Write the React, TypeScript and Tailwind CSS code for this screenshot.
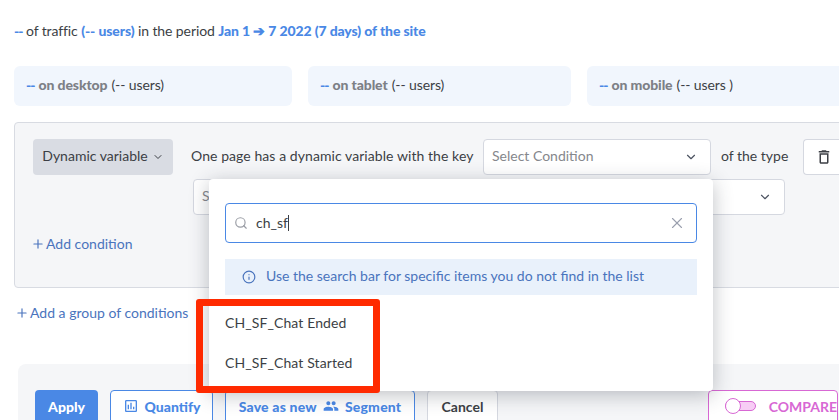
import { ChevronDown, Info, Plus, Search, X } from 'lucide-react';
import { MdOutlineAssessment, MdOutlineDelete, MdPeople } from 'react-icons/md';

const font = { fontFamily: 'Lato, "Liberation Sans", sans-serif' };

function StatCard({ label, users, className }: { label: string; users: string; className: string }) {
    return (
        <div className={`flex h-10 shrink-0 items-center rounded-md bg-[#f1f6fd] px-3 pb-1 tracking-[-0.1px] text-[#3c3f45] ${className}`}>
            <span className="font-black tracking-[-1px] text-[#4a88e5]">--</span>
            <span className="ml-1 font-black text-[#7d8086]">{label}</span>
            <span className="ml-1">{users}</span>
        </div>
    );
}

function SelectBox({ label, className }: { label: string; className: string }) {
    return (
        <div className={`flex h-9 items-center justify-between rounded border border-[#d5d8e0] bg-white pl-2 pr-3 text-[#85878c] ${className}`}>
            <span className="pb-1">{label}</span>
            <ChevronDown className="h-3.5 w-3.5 text-[#4c5361]" />
        </div>
    );
}

export default function App() {
    return (
        <div className="relative h-[420px] w-[839px] overflow-hidden bg-white text-[14px] text-[#3c3f45]" style={font}>
            <p className="ml-3.5 pt-[22px] leading-[18px] tracking-[-0.1px]">
                <span className="font-black tracking-[-1px] text-[#4a88e5]">--</span> of traffic{' '}
                <span className="font-black text-[#4a88e5]">(-- users)</span> in the period{' '}
                <span className="font-black tracking-[-0.12px] text-[#4a88e5]">Jan 1 ➔ 7 2022 (7 days) of the site</span>
            </p>

            <div className="ml-3.5 mt-[26px] flex gap-4">
                <StatCard label="on desktop" users="(-- users)" className="w-[278px]" />
                <StatCard label="on tablet" users="(-- users)" className="w-[263px]" />
                <StatCard label="on mobile" users="(-- users )" className="w-[280px]" />
            </div>

            <div className="ml-3.5 mt-4 h-[166px] w-[860px] rounded border border-[#d8dbe2] bg-[#f5f6f8] pl-[18px] pt-4">
                <div className="flex items-center">
                    <div className="flex h-9 w-[140px] items-center justify-center gap-1 rounded bg-[#d9dce3]">
                        <span className="pb-1">Dynamic variable</span>
                        <ChevronDown className="h-3 w-3" />
                    </div>
                    <span className="ml-[18px] w-[292px] whitespace-nowrap pb-1 tracking-[0.07px]">One page has a dynamic variable with the key</span>
                    <SelectBox label="Select Condition" className="w-[228px]" />
                    <span className="ml-2.5 w-[82px] whitespace-nowrap pb-1">of the type</span>
                    <div className="flex h-9 w-10 items-center justify-center rounded-l border border-r-0 border-[#d5d8e0] bg-white">
                        <MdOutlineDelete className="h-[18px] w-[18px]" />
                    </div>
                </div>
                <SelectBox label="Select" className="ml-40 mt-1 w-[592px]" />
                <div className="mt-[18px] flex items-center text-[#4a74bd]">
                    <Plus className="-ml-0.5 h-3.5 w-3.5" />
                    <span className="ml-px">Add condition</span>
                </div>
            </div>

            <div className="ml-[15px] mt-3.5 flex items-center text-[#4a74bd]">
                <Plus className="h-3.5 w-3.5" />
                <span className="ml-px">Add a group of conditions</span>
            </div>

            <div className="ml-[18px] mt-[41px] flex h-14 w-[840px] items-start rounded-tl-lg bg-[#f5f6f8] pl-[17px] pt-[26px] font-black">
                <div className="flex h-[34px] w-[63px] items-center justify-center rounded-t bg-[#4a88e5] pb-0.5 text-white">Apply</div>
                <div className="ml-3 flex h-[34px] w-[103px] items-center justify-center gap-1.5 rounded-t border border-[#4a88e5] bg-white pb-0.5 text-[#4a88e5]">
                    <MdOutlineAssessment className="h-4 w-4" />
                    Quantify
                </div>
                <div className="ml-3 flex h-[34px] w-[190px] items-center justify-center gap-1.5 rounded-t border border-[#4a88e5] bg-white pb-0.5 tracking-[0.2px] text-[#4a88e5]">
                    Save as new
                    <MdPeople className="h-4 w-4" />
                    Segment
                </div>
                <div className="ml-3 flex h-[34px] w-[71px] items-center justify-center rounded-t border border-[#d5d8e0] bg-white pb-0.5 font-bold">Cancel</div>
                <div className="ml-[210px] flex h-[34px] w-[130px] items-center whitespace-nowrap rounded-t border border-[#d868d4] bg-white pb-0.5 pl-4 font-bold text-[#d868d4]">
                    <div className="relative mr-[13px] h-2.5 w-[35px] rounded-full border border-[#d868d4] bg-[#f7cdf5]">
                        <div className="absolute -left-px -top-1 h-4 w-4 rounded-full border border-[#d868d4] bg-white" />
                    </div>
                    COMPARE
                </div>
            </div>

            {/* dropdown open over the second select */}
            <div className="absolute left-[209px] top-[179px] h-[212px] w-[504px] rounded bg-white px-4 pt-6 shadow-[0_4px_20px_rgba(40,45,60,0.3)]">
                <div className="flex h-[40px] items-center rounded border border-[#4a88e5] pl-2 pr-2.5">
                    <Search className="h-3.5 w-3.5 text-[#9a9da5]" />
                    <span className="ml-2 border-r border-[#3c3f45] leading-4">ch_sf</span>
                    <X className="ml-auto h-[18px] w-[18px] text-[#9a9fae]" strokeWidth={1.5} />
                </div>
                <div className="mt-4 flex h-9 items-center bg-[#e9f1fb] pl-[17px] text-[#4a74bd]">
                    <Info className="h-3.5 w-3.5" />
                    <span className="ml-2.5 pb-1">Use the search bar for specific items you do not find in the list</span>
                </div>
                <div className="mt-[7px] flex h-10 items-center tracking-[0.1px]">CH_SF_Chat Ended</div>
                <div className="flex h-10 items-center tracking-[0.1px]">CH_SF_Chat Started</div>
            </div>

            {/* red highlight drawn on top of the screenshot */}
            <div className="absolute left-[196px] top-[299px] h-[94px] w-[184px] rounded-[3px] border-[7px] border-[#ff2a00]" />
        </div>
    );
}
